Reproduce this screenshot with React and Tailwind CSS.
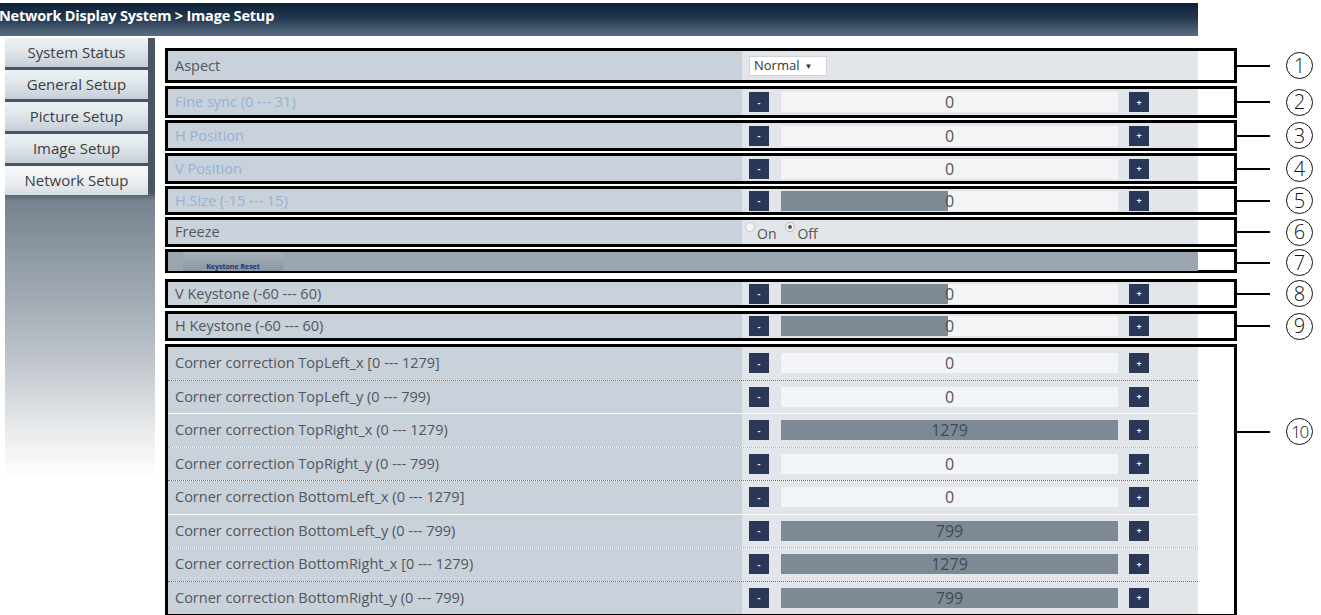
import React from "react";

const FONT = { fontFamily: '"Open Sans", "Noto Sans", sans-serif' };

function Btn({ sign }) {
  return (
    <div className="w-[20px] h-[20px] bg-[#2b3756] flex items-center justify-center text-white text-[9px] leading-none font-bold shrink-0">
      {sign}
    </div>
  );
}

function Stepper({ value, fill }) {
  return (
    <div className="flex items-center h-full pl-[7px]">
      <Btn sign="-" />
      <div className="ml-[12px] w-[337px] h-[20px] bg-[#f3f4f5] relative flex">
        {fill > 0 && <div className="h-full bg-[#7d8a96]" style={{ width: fill + "%" }} />}
        <div
          className={
            "absolute inset-0 flex items-center justify-center text-[16px] leading-none " +
            (fill === 100 ? "text-[#3e4a57]" : "text-[#555]")
          }
        >
          {value}
        </div>
      </div>
      <div className="ml-[11px]">
        <Btn sign="+" />
      </div>
    </div>
  );
}

function Row({ label, blue, children, extra = "" }) {
  return (
    <div className={"flex flex-1 " + extra}>
      <div
        className={
          "w-[574px] bg-[#c9d1da] flex items-center pl-[7px] text-[14.5px] whitespace-nowrap " +
          (blue ? "text-[#95b2d8]" : "text-[#52575d]")
        }
      >
        {label}
      </div>
      <div className="w-[456px] bg-[#e2e6ea]">{children}</div>
    </div>
  );
}

function Circle({ n }) {
  return (
    <div
      className={
        "w-[27px] h-[27px] rounded-full border-[1.5px] border-[#111] flex items-center justify-center text-[#111] leading-none font-light " +
        (n > 9 ? "text-[17px] tracking-[-1.5px]" : "text-[20px]")
      }
    >
      {n}
    </div>
  );
}

function Group({ n, hClass, mtClass, annClass = "items-center", children }) {
  return (
    <div className={"flex " + mtClass}>
      <div className={"w-[1072px] border-[3px] border-black bg-white flex " + hClass}>
        <div className="w-[1030px] flex flex-col">{children}</div>
      </div>
      <div className={"flex " + annClass}>
        <div className="w-[33px] h-[2px] bg-black" />
        <div className="ml-[16px]">
          <Circle n={n} />
        </div>
      </div>
    </div>
  );
}

const corner = [
  ["Corner correction TopLeft_x [0 --- 1279]", "0", 0, "border-b border-dotted border-[#666]"],
  ["Corner correction TopLeft_y (0 --- 799)", "0", 0, "border-b border-white"],
  ["Corner correction TopRight_x (0 --- 1279)", "1279", 100, "border-b border-dotted border-[#aab2bb]"],
  ["Corner correction TopRight_y (0 --- 799)", "0", 0, "border-b border-dotted border-[#666]"],
  ["Corner correction BottomLeft_x (0 --- 1279]", "0", 0, "border-b border-white"],
  ["Corner correction BottomLeft_y (0 --- 799)", "799", 100, "border-b border-dotted border-[#aab2bb]"],
  ["Corner correction BottomRight_x [0 --- 1279)", "1279", 100, "border-b border-dotted border-[#666]"],
  ["Corner correction BottomRight_y (0 --- 799)", "799", 100, ""],
];

const menu = ["System Status", "General Setup", "Picture Setup", "Image Setup", "Network Setup"];

export default function App() {
  return (
    <div className="w-[1321px] h-[615px] bg-white overflow-hidden" style={FONT}>
      <div className="pt-[3px]">
        <div className="w-[1198px] h-[33px] bg-[linear-gradient(to_bottom,#0d2137_0%,#22384f_45%,#5a6d83_100%)] flex items-start pt-[2px]">
          <span className="ml-[-1px] text-white font-bold text-[14.5px] tracking-[-0.2px]">
            Network Display System &gt; Image Setup
          </span>
        </div>
      </div>
      <div className="flex pl-[5px]">
        <div className="w-[150px] mt-[2px] h-[440px] bg-[linear-gradient(to_bottom,#4b555f_0%,#4b555f_35%,#76828e_37%,#8c97a2_48%,#b9c0c7_71%,#e8eaec_89%,#ffffff_100%)]">
          <div className="flex flex-col gap-[3px] w-[143px]">
            {menu.map((m, i) => (
              <div
                key={m}
                className={
                  "h-[29px] flex items-center justify-center text-[15px] text-[#3b3d40] " +
                  (i === 4
                    ? "bg-[linear-gradient(to_bottom,#f6f8f9,#eceff2_50%,#d6dde3)]"
                    : "bg-[linear-gradient(to_bottom,#eef2f5,#dde3e8_50%,#c6cfd8)]")
                }
              >
                {m}
              </div>
            ))}
          </div>
        </div>
        <div className="ml-[10px] mt-[12px]">
          <Group n={1} hClass="h-[35px]" mtClass="">
            <Row label="Aspect">
              <div className="flex items-center h-full pl-[7px]">
                <div className="h-[20px] w-[78px] bg-white border border-[#d0d4d8] flex items-center pl-[4px] text-[13px] text-[#333]">
                  Normal <span className="ml-[5px] text-[8px]">▼</span>
                </div>
              </div>
            </Row>
          </Group>
          <Group n={2} hClass="h-[32px]" mtClass="mt-[3px]">
            <Row label="Fine sync (0 --- 31)" blue>
              <Stepper value="0" fill={0} />
            </Row>
          </Group>
          <Group n={3} hClass="h-[31px]" mtClass="mt-[2px]">
            <Row label="H Position" blue>
              <Stepper value="0" fill={0} />
            </Row>
          </Group>
          <Group n={4} hClass="h-[31px]" mtClass="mt-[2px]">
            <Row label="V Position" blue>
              <Stepper value="0" fill={0} />
            </Row>
          </Group>
          <Group n={5} hClass="h-[29px]" mtClass="mt-[2px]">
            <Row label="H.Size (-15 --- 15)" blue>
              <Stepper value="0" fill={49.5} />
            </Row>
          </Group>
          <Group n={6} hClass="h-[30px]" mtClass="mt-[2px]">
            <Row label="Freeze">
              <div className="flex items-end h-full pl-[3px] pb-[3px] text-[14px] text-[#555]">
                <div className="w-[10px] h-[10px] rounded-full border border-[#c4c8cc] bg-[#f4f4f4] mb-[9px]" />
                <span className="ml-[2px] leading-none">On</span>
                <div className="ml-[9px] w-[10px] h-[10px] rounded-full border border-[#b5b9bd] bg-[#f4f4f4] mb-[9px] flex items-center justify-center">
                  <div className="w-[4px] h-[4px] rounded-full bg-[#555]" />
                </div>
                <span className="ml-[2px] leading-none">Off</span>
              </div>
            </Row>
          </Group>
          <Group n={7} hClass="h-[24px]" mtClass="mt-[2px]">
            <div className="flex-1 bg-[#9ba6b1] flex items-end pl-[15px]">
              <div className="w-[100px] h-[19px] bg-[linear-gradient(to_bottom,#a7b1bb,#8a96a2)] flex items-end justify-center pb-[1px] text-[7px] font-bold text-[#1d3470] leading-none">
                Keystone Reset
              </div>
            </div>
          </Group>
          <Group n={8} hClass="h-[29px]" mtClass="mt-[3px]">
            <Row label="V Keystone (-60 --- 60)">
              <Stepper value="0" fill={49.5} />
            </Row>
          </Group>
          <Group n={9} hClass="h-[30px]" mtClass="mt-[3px]">
            <Row label="H Keystone (-60 --- 60)">
              <Stepper value="0" fill={49.5} />
            </Row>
          </Group>
          <Group n={10} hClass="h-[273px]" mtClass="mt-[3px]" annClass="items-center self-start pt-[74px]">
            {corner.map(([l, v, f, b]) => (
              <Row key={l} label={l} extra={b}>
                <Stepper value={v} fill={f} />
              </Row>
            ))}
          </Group>
        </div>
      </div>
    </div>
  );
}
